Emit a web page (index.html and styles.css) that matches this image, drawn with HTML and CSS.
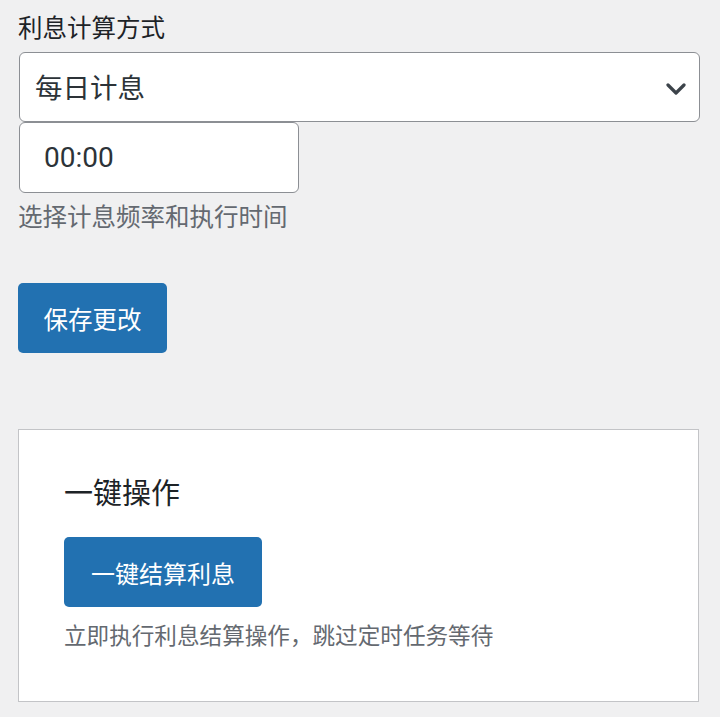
FILE: index.html
```html
<!DOCTYPE html>
<html lang="zh-CN">
<head>
<meta charset="utf-8">
<link rel="stylesheet" href="styles.css">
</head>
<body>
<div class="page">
  <div class="field">
    <label class="label">利息计算方式</label>
    <div class="select">
      <span class="select-text">每日计息</span>
      <svg class="chevron" width="20" height="12" viewBox="0 0 20 12"><path d="M2 2 L10 10 L18 2" fill="none" stroke="#3c434a" stroke-width="3.2" stroke-linecap="round" stroke-linejoin="round"/></svg>
    </div>
    <div class="time-input">00:00</div>
    <p class="desc">选择计息频率和执行时间</p>
  </div>
  <button class="btn btn-save">保存更改</button>
  <div class="card">
    <h2 class="card-title">一键操作</h2>
    <button class="btn btn-action">一键结算利息</button>
    <p class="desc desc-card">立即执行利息结算操作，跳过定时任务等待</p>
  </div>
</div>
</body>
</html>
```
FILE: styles.css
```css
html, body {
  margin: 0;
  padding: 0;
  background: #f0f0f1;
}
body {
  font-family: Roboto, "Noto Sans CJK SC", sans-serif;
  color: #1d2327;
}
.page {
  padding: 12px 21px 0 18px;
}
.field {
  display: flex;
  flex-direction: column;
  align-items: flex-start;
}
.label {
  font-size: 24.5px;
  line-height: 34px;
  color: #1d2327;
}
.select {
  margin-top: 6px;
  margin-left: 1px;
  box-sizing: border-box;
  width: 681px;
  height: 70px;
  background: #fff;
  border: 1px solid #8c8f94;
  border-radius: 6px;
  display: flex;
  align-items: center;
  justify-content: space-between;
  padding: 0 13px 0 15px;
}
.select-text {
  font-size: 27.5px;
  color: #2c3338;
  margin-top: -3px;
}
.chevron {
  display: block;
  margin-top: 3px;
}
.time-input {
  margin-left: 1px;
  box-sizing: border-box;
  width: 280px;
  height: 71px;
  background: #fff;
  border: 1px solid #8c8f94;
  border-radius: 6px;
  display: flex;
  align-items: center;
  padding-left: 24px;
  font-size: 28px;
  color: #2c3338;
}
.desc {
  margin: 8px 0 0;
  font-size: 24.5px;
  line-height: 34px;
  color: #646970;
}
.btn {
  display: block;
  box-sizing: border-box;
  height: 70px;
  border: none;
  border-radius: 5px;
  background: #2271b1;
  color: #fff;
  font-family: Roboto, "Noto Sans CJK SC", sans-serif;
  font-size: 24.5px;
  padding: 0 25px;
  cursor: pointer;
}
.btn-save {
  margin-top: 48px;
  width: 149px;
}
.card {
  margin-top: 76px;
  box-sizing: border-box;
  width: 681px;
  background: #fff;
  border: 1px solid #c3c4c7;
  padding: 44px 45px 48px;
}
.card-title {
  margin: 0;
  font-size: 29px;
  line-height: 40px;
  font-weight: 400;
  color: #1d2327;
}
.btn-action {
  margin-top: 23px;
  width: 198px;
  font-size: 24px;
}
.desc-card {
  margin-top: 14px;
  font-size: 22.6px;
  line-height: 32px;
}
```
